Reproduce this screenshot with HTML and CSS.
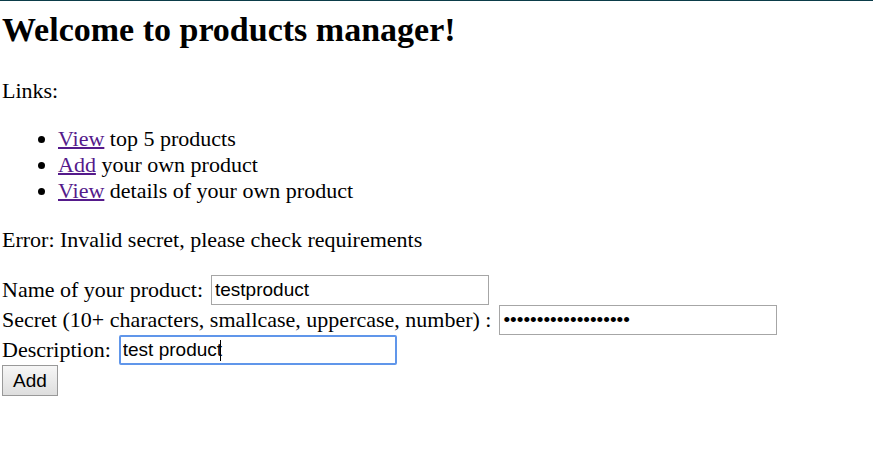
FILE: index.html
```html
<!DOCTYPE html>
<html lang="en">
<head>
<meta charset="utf-8">
<title>Products manager</title>
<link rel="stylesheet" href="styles.css">
</head>
<body>
<main>
<h1>Welcome to products manager!</h1>
<p>Links:</p>
<ul>
<li><a href="#top">View</a> top 5 products</li>
<li><a href="#add">Add</a> your own product</li>
<li><a href="#details">View</a> details of your own product</li>
</ul>
<p>Error: Invalid secret, please check requirements</p>
<form>
<div class="row"><label for="name">Name of your product:</label><input id="name" type="text" value="testproduct"></div>
<div class="row"><label for="secret">Secret (10+ characters, smallcase, uppercase, number) :</label><input id="secret" type="password" value="Invalidsecret123456"></div>
<div class="row"><label for="description">Description:</label><span class="field"><input id="description" class="active" type="text" value="test product"><span class="caret"></span></span></div>
<button type="button">Add</button>
</form>
</main>
</body>
</html>
```
FILE: styles.css
```css
body {
  margin: 0;
  border-top: 1px solid #0b3c49;
  background: #fff;
  color: #000;
  font: 22px/26px "Liberation Serif", serif;
}

main {
  padding: 9px 2px;
}

h1 {
  margin: 0 0 28px;
  font-size: 34px;
  line-height: 40px;
}

p {
  margin: 0 0 22px;
}

ul {
  margin: 0 0 23px;
  padding-left: 56px;
}

a {
  color: #551a8b;
  text-decoration-thickness: 2px;
}

.row {
  display: flex;
  align-items: center;
  gap: 8px;
  height: 30px;
}

input {
  box-sizing: border-box;
  width: 278px;
  height: 30px;
  margin: 0;
  padding: 1px 3px;
  border: 1px solid #a6a6a6;
  background: #fff;
  color: #000;
  font: 19px "Liberation Sans", sans-serif;
  outline: none;
}

.field {
  position: relative;
  display: flex;
}

.active {
  border: 2px solid #6096ea;
  border-radius: 2px;
  padding: 0 2px;
}

.caret {
  position: absolute;
  top: 5px;
  left: 101px;
  width: 1px;
  height: 21px;
  background: #000;
}

button {
  display: block;
  padding: 3px 10px;
  border: 1px solid #999;
  background: linear-gradient(#f6f6f6, #dedede);
  color: #000;
  font: 19px/23px "Liberation Sans", sans-serif;
}
```
